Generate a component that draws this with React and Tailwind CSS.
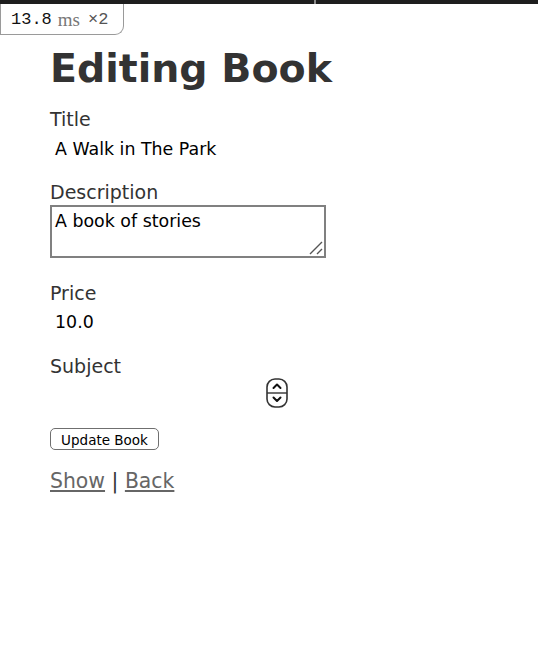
export default function App() {
  return (
    <div className="relative min-h-[650px] bg-white">
      {/* top bar */}
      <div className="flex h-[4px] w-full">
        <div className="h-full w-[314px] bg-[#1e1e1e]" />
        <div className="h-full w-[2px] bg-[#8a8a8a]" />
        <div className="h-full flex-1 bg-[#1e1e1e]" />
      </div>

      {/* timing badge */}
      <div className="absolute left-0 top-[4px] flex h-[31px] w-[124px] items-center rounded-br-[9px] border-b border-r border-l border-[#9a9a9a] bg-white pl-[10px] font-['Liberation_Mono',monospace] leading-none">
        <span className="text-[17px] text-[#111]">13.8</span>
        <span className="ml-[6px] font-['Liberation_Serif',serif] text-[19px] text-[#777]">ms</span>
        <span className="ml-[8px] text-[17px] text-[#555]">×2</span>
      </div>

      <div className="flex flex-col items-start px-[50px] font-['DejaVu_Sans',sans-serif]">
        <h1 className="mt-[40px] text-[39.5px] font-bold leading-[48px] text-[#333]">Editing Book</h1>

        <label className="mt-[15px] text-[19px] leading-[24px] text-[#333]">Title</label>
        <div className="mt-[6px] h-[24px] px-[5px] text-[17.4px] leading-[24px] text-black">A Walk in The Park</div>

        <label className="mt-[19px] text-[19px] leading-[24px] text-[#333]">Description</label>
        <div className="relative mt-[1px] h-[53px] w-[276px] border-2 border-[#808080] px-[3px] pt-[4px] text-[17.4px] leading-[20px] text-black">
          A book of stories
          <svg className="absolute bottom-[1px] right-[1px]" width="15" height="15" viewBox="0 0 15 15">
            <path d="M2 14 L14 2 M9 14 L14 9" stroke="#555" strokeWidth="1.4" fill="none" />
          </svg>
        </div>

        <label className="mt-[23px] text-[19px] leading-[24px] text-[#333]">Price</label>
        <div className="mt-[5px] h-[24px] px-[5px] text-[17.4px] leading-[24px] text-black">10.0</div>

        <label className="mt-[20px] text-[19px] leading-[24px] text-[#333]">Subject</label>
        <div className="flex h-[30px] w-[240px] items-center justify-end pr-[2px]">
          <svg width="22" height="30" viewBox="0 0 22 30">
            <rect x="1" y="1" width="20" height="28" rx="8" stroke="#333" strokeWidth="1.6" fill="none" />
            <path d="M1 15 H21" stroke="#333" strokeWidth="1.4" />
            <path d="M7.5 10 L11 6.5 L14.5 10" stroke="#111" strokeWidth="2" fill="none" strokeLinecap="round" strokeLinejoin="round" />
            <path d="M7.5 19.5 L11 23 L14.5 19.5" stroke="#111" strokeWidth="2" fill="none" strokeLinecap="round" strokeLinejoin="round" />
          </svg>
        </div>

        <button className="mt-[20px] flex h-[22px] w-[109px] items-end justify-center rounded-[5px] border border-[#6f6f6f] bg-white pb-[2px] text-[13.5px] leading-none text-black">
          Update Book
        </button>

        <div className="mt-[19px] text-[20.4px] leading-[24px]">
          <a href="#" className="text-[#666] underline">Show</a>
          <span className="text-[#333]">&nbsp;|&nbsp;</span>
          <a href="#" className="text-[#666] underline">Back</a>
        </div>
      </div>
    </div>
  );
}
